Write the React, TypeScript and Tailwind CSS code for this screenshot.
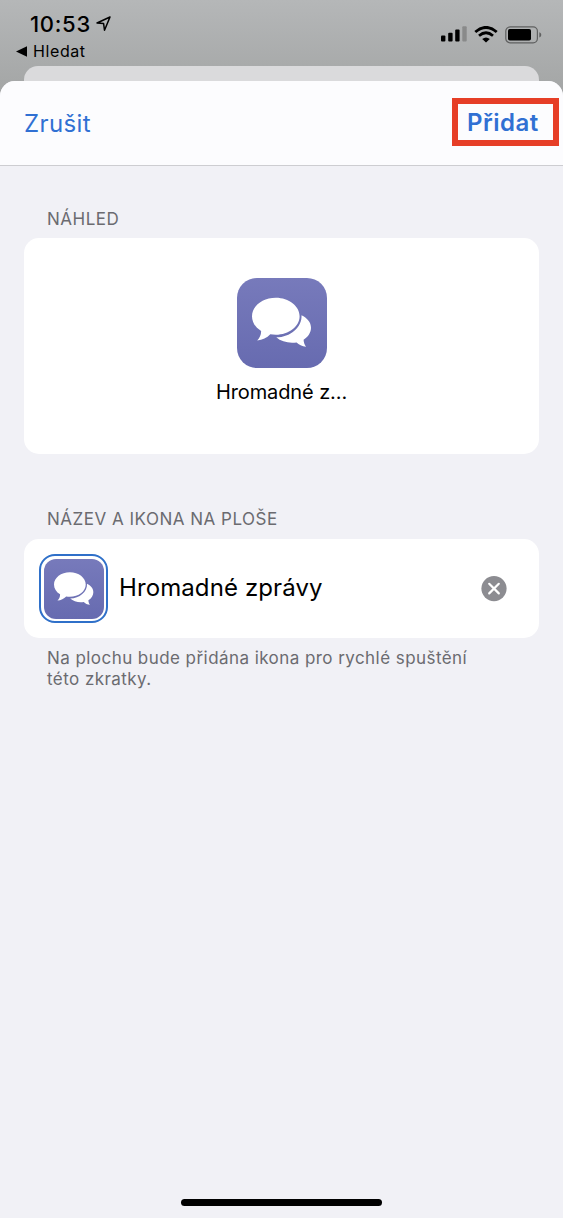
function LocationArrow() {
  return (
    <svg width="15" height="16" viewBox="0 0 15 16" fill="none">
      <path
        d="M14 1 1 7l6.6.6.9 6.6z"
        stroke="#000"
        strokeWidth="1.5"
        strokeLinejoin="round"
      />
    </svg>
  )
}

function Signal() {
  return (
    <svg width="26" height="16" viewBox="0 0 26 16">
      <rect x="0" y="9.5" width="4.4" height="6" rx="1" />
      <rect x="7.2" y="6.8" width="4.4" height="8.7" rx="1" />
      <rect x="14.2" y="3.5" width="4.4" height="12" rx="1" />
      <rect x="21.3" y="0.3" width="4.4" height="15.2" rx="1" fill="#898a8a" />
    </svg>
  )
}

function Wifi() {
  return (
    <svg width="24" height="17" viewBox="0 0 24 17" fill="none">
      <path d="M1.3 6Q12-3.2 22.7 6" stroke="#000" strokeWidth="2.9" />
      <path d="M5 9.7q7-5.9 14 0" stroke="#000" strokeWidth="2.8" />
      <path d="M8.2 12.9q3.8-3 7.6 0L12 16.5z" fill="#000" />
    </svg>
  )
}

function Battery() {
  return (
    <svg width="37" height="18" viewBox="0 0 37 18" fill="none">
      <rect x="0.8" y="0.8" width="31.6" height="16" rx="4.3" stroke="#5f6060" strokeWidth="1.2" />
      <rect x="3" y="3" width="23" height="11.5" rx="1.8" fill="#000" />
      <path d="M34.3 6.2c2.6.9 2.6 4.3 0 5.2z" fill="#5f6060" />
    </svg>
  )
}

function ChatIcon({ className }: { className: string }) {
  return (
    <div className={`bg-linear-to-b from-[#777abb] to-[#676bb0] ${className}`}>
      <svg className="size-full" viewBox="0 0 90 90" fill="#fff">
        <path d="M64.5 37.2C70.1 39.700 74 44.300 74 49.700c0 4.700-2.800 9.200-7.400 12 .1 2.700.9 5.100 2.500 7-4.100-.5-7.300-2-9.500-4.300-7.500 1.100-15.300-.5-20.300-5.100C53 59.400 65.300 49.200 64.500 37.200z" />
        <path d="M38.800 19.700c13.100 0 23.800 8.300 23.800 18.500S51.900 56.700 38.800 56.700c-1.900 0-3.800-.2-5.500-.5-3.400 3.500-7.800 5.900-13.100 6.200 2.600-2.500 4.100-5.800 3.900-9.500-5.700-3.400-9.100-8.700-9.100-14.700 0-10.200 10.700-18.500 23.800-18.500z" />
      </svg>
    </div>
  )
}

export default function App() {
  return (
    <div className="flex h-[1218px] w-[563px] flex-col overflow-hidden bg-linear-to-b from-[#b5b7b8] to-[#a4a6a6] to-[90px] font-['Inter',sans-serif] text-black">
      <header className="flex h-[66px] shrink-0 justify-between">
        <div className="pt-[10px] pl-4">
          <div className="flex items-center gap-[5px] pl-3.5">
            <span className="text-[22px] leading-7 font-medium tracking-[0.7px]">10:53</span>
            <LocationArrow />
          </div>
          <div className="flex items-center gap-1.5">
            <svg width="11" height="11" viewBox="0 0 11 11">
              <path d="M0 5.5 11 .3v10.4z" />
            </svg>
            <span className="text-[16px] leading-[26px] tracking-[0.6px]">Hledat</span>
          </div>
        </div>
        <div className="flex items-start gap-[7px] pt-[26px] pr-[21px]">
          <Signal />
          <Wifi />
          <Battery />
        </div>
      </header>

      <div className="mx-6 h-[15px] shrink-0 rounded-t-[14px] bg-[#dadadc]" />

      <main className="flex flex-1 flex-col overflow-hidden rounded-t-[15px] bg-[#f1f1f6]">
        <nav className="flex h-[85px] shrink-0 items-start justify-between border-b border-[#cdcdd1] bg-[#fcfcfe] pt-[17px] pr-1 pl-6 text-2xl text-[#3070d3]">
          <button className="h-[51px] tracking-[0.4px]">Zrušit</button>
          <button className="flex h-12 w-[107px] items-center border-6 border-[#e63e27] pt-0.5 pl-[9px] font-semibold tracking-[0.5px]">
            Přidat
          </button>
        </nav>

        <section className="px-6 pt-[41px]">
          <h2 className="pl-[23px] text-[17px] leading-6 tracking-[0.5px] text-[#6b6b70]">NÁHLED</h2>
          <div className="mt-[7px] flex h-[216px] flex-col items-center rounded-[15px] bg-white pt-10">
            <ChatIcon className="size-[90px] rounded-[20px]" />
            <p className="mt-2.5 text-xl leading-7 tracking-[-0.1px]">Hromadné z...</p>
          </div>
        </section>

        <section className="px-6 pt-[53px]">
          <h2 className="pl-[23px] text-[17px] leading-6 tracking-[0.5px] text-[#6b6b70]">NÁZEV A IKONA NA PLOŠE</h2>
          <div className="mt-2 flex h-[99px] items-center rounded-[15px] bg-white pr-8 pl-[15px]">
            <div className="flex size-[69px] items-center justify-center rounded-[16px] border-2 border-[#2f70c9]">
              <ChatIcon className="size-[60px] rounded-[12px]" />
            </div>
            <span className="pb-0.5 pl-[11px] text-2xl tracking-[0.1px]">Hromadné zprávy</span>
            <svg className="ml-auto" width="26" height="26" viewBox="0 0 26 26">
              <circle cx="13" cy="12.6" r="12.6" fill="#8c8c91" />
              <path d="m8.2 7.8 9.6 9.6m0-9.6-9.6 9.6" stroke="#fff" strokeWidth="2.2" strokeLinecap="round" />
            </svg>
          </div>
          <p className="mt-2.5 pl-[23px] text-[17px] leading-[21px] tracking-[0.44px] text-[#6b6b70]">
            Na plochu bude přidána ikona pro rychlé spuštění
            <br />
            této zkratky.
          </p>
        </section>

        <div className="mx-auto mt-auto mb-3 h-[7px] w-[201px] rounded-full bg-black" />
      </main>
    </div>
  )
}
